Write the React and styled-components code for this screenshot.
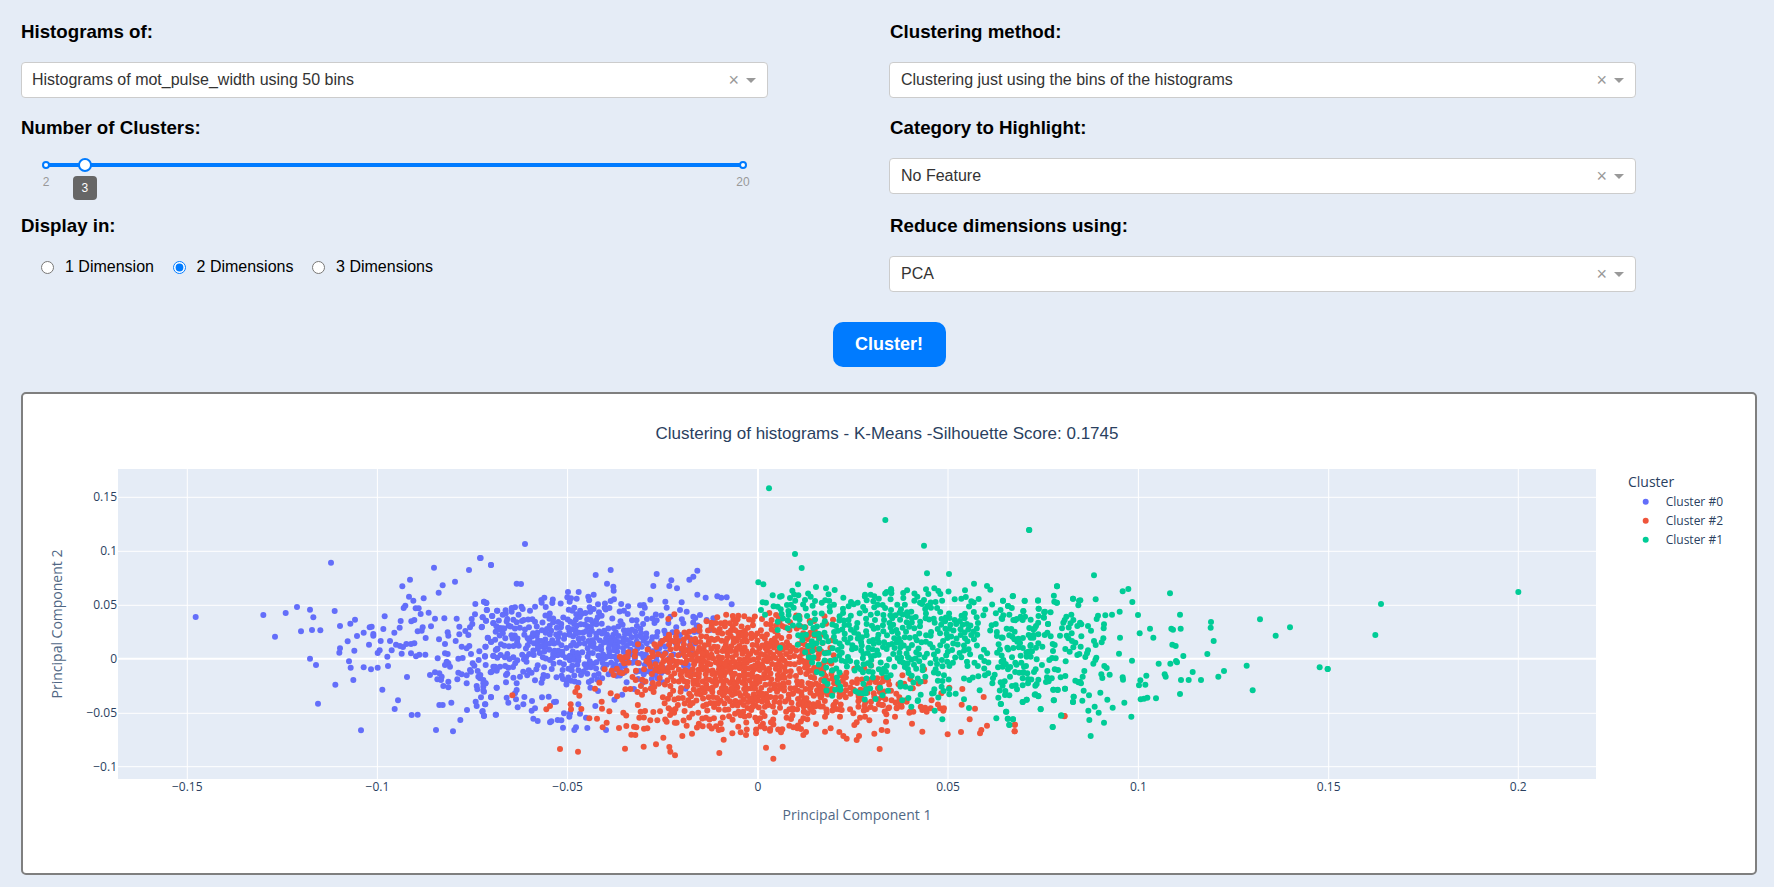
import React, { useMemo } from "react";
import styled, { createGlobalStyle } from "styled-components";

const Global = createGlobalStyle`
  html, body { margin: 0; padding: 0; background: #e5ecf6; }
  body { font-family: "Liberation Sans", Arial, sans-serif; color: #000; }
`;

const Page = styled.div`
  width: 1774px;
  height: 887px;
  overflow: hidden;
  display: flex;
  flex-direction: column;
  background: #e5ecf6;
`;
const Controls = styled.div`
  display: grid;
  grid-template-columns: 889px 1fr;
  grid-template-rows: 96px 98px 81px;
  padding-top: 17px;
`;
const Field = styled.div`
  padding-left: ${(p) => (p.$right ? "0" : "21px")};
  width: ${(p) => (p.$right ? "747px" : "768px")};
  box-sizing: border-box;
`;
const Label = styled.div`
  font-size: 18.72px;
  font-weight: 700;
  line-height: 27px;
  height: 27px;
  margin-top: 1px;
  margin-bottom: 17px;
  padding-left: ${(p) => (p.$right ? "1px" : "0")};
`;
const SelectBox = styled.div`
  height: 36px;
  box-sizing: border-box;
  background: #fff;
  border: 1px solid #ccc;
  border-radius: 4px;
  display: flex;
  align-items: center;
  padding: 0 10px 0 ${(p) => (p.$right ? "11px" : "10px")};
  font-size: 16px;
  color: #333;
`;
const SelectValue = styled.span`
  flex: 1;
  white-space: nowrap;
`;
const Clear = styled.span`
  color: #999;
  font-size: 18px;
  line-height: 1;
  margin-right: 7px;
`;
const Arrow = styled.span`
  width: 0;
  height: 0;
  border-style: solid;
  border-width: 5px 5px 0;
  border-color: #999 transparent transparent;
  margin-right: 1px;
`;
const SliderWrap = styled.div`
  position: relative;
  height: 60px;
  margin-top: -18px;
  margin-left: 25px;
  width: 697px;
`;
const Track = styled.div`
  position: absolute;
  left: 0;
  right: 0;
  top: 23px;
  height: 4px;
  background: #007bff;
`;
const Dot = styled.span`
  position: absolute;
  top: 21px;
  width: 8px;
  height: 8px;
  box-sizing: border-box;
  margin-left: -4px;
  border: 2px solid #007bff;
  border-radius: 50%;
  background: #fff;
`;
const Thumb = styled.span`
  position: absolute;
  top: 18px;
  width: 14px;
  height: 14px;
  box-sizing: border-box;
  margin-left: -7px;
  border: 2px solid #007bff;
  border-radius: 50%;
  background: #fff;
`;
const Mark = styled.span`
  position: absolute;
  top: 35px;
  transform: translateX(-50%);
  font-size: 12px;
  line-height: 14px;
  color: #999;
`;
const Tip = styled.span`
  position: absolute;
  top: 36px;
  width: 24px;
  height: 24px;
  margin-left: -12px;
  border-radius: 4px;
  background: #666;
  color: #fff;
  font-size: 12px;
  display: flex;
  align-items: center;
  justify-content: center;
`;
const RadioRow = styled.div`
  display: flex;
  gap: 18.6px;
  padding-left: 20px;
  height: 20px;
  align-items: center;
  margin-top: 18px;
`;
const RadioLabel = styled.label`
  display: flex;
  align-items: center;
  font-size: 16px;
  line-height: 20px;
`;
const RadioInput = styled.input`
  width: 13px;
  height: 13px;
  margin: 0 11px 0 0;
  accent-color: #007bff;
`;
const ButtonRow = styled.div`
  display: flex;
  justify-content: center;
  padding: 30px 0 0 4px;
  margin-bottom: 25px;
  height: 45px;
`;
const Button = styled.button`
  width: 113px;
  height: 45px;
  border: 0;
  border-radius: 10px;
  background: #007bff;
  color: #fff;
  font: 700 18px "Liberation Sans", Arial, sans-serif;
`;
const Panel = styled.div`
  width: 1736px;
  height: 483px;
  box-sizing: border-box;
  margin-left: 21px;
  background: #fff;
  border: 2px solid #7f7f7f;
  border-radius: 5px;
  overflow: hidden;
`;
const Chart = styled.svg`
  display: block;
  width: 1732px;
  height: 479px;
`;
const Tick = styled.text`
  font: 12px "Open Sans", sans-serif;
  fill: #2a3f5f;
`;
const AxisTitle = styled.text`
  font: 14px "Open Sans", sans-serif;
  fill: #506784;
`;
const ChartTitle = styled.text`
  font: 17px "Liberation Sans", Arial, sans-serif;
  fill: #2a3f5f;
`;
const LegendTitle = styled.text`
  font: 14px "Open Sans", sans-serif;
  fill: #2a3f5f;
`;
const LegendItem = styled.text`
  font: 12px "Open Sans", sans-serif;
  fill: #2a3f5f;
`;

const BLUE = "#636efa";
const RED = "#ef553b";
const GREEN = "#00cc96";

const from = (ox, oy, a) => {
  const out = [];
  for (let i = 0; i < a.length; i += 2) out.push([ox + a[i] / 3, oy + a[i + 1] / 3]);
  return out;
};

const blueLeft = from(0, 390, [587,681,790,675,825,740,857,669,891,651,903,724,930,659,936,720,940,682,961,721,930,806,948,825,954,941,993,518,1004,663,1006,884,1020,708,1018,788,1020,775,1043,754,1047,814,1052,833,1060,870,1063,782,1051,701,1065,689,1071,738,1083,1021,1091,728,1091,832,1107,764,1109,712,1115,710,1120,732,1120,737,1113,838,1133,833,1133,789,1139,781,1142,753,1147,899,1150,717,1154,679,1162,800,1164,828,1170,753,1175,781,1183,728,1184,957,1194,931,1188,764,1199,713,1202,693,1200,768,1209,771,1205,791,1211,654,1216,647,1207,589,1221,861,1219,762,1230,569,1227,620,1240,632,1233,762,1243,760,1233,790,1234,694,1243,690,1247,655,1256,655,1262,672,1253,724,1268,712,1265,722,1277,744,1248,799,1258,794,1276,794,1271,625,1286,668,1293,709,1305,686,1302,533,1316,608,1328,586,1365,575,1407,540,1440,504,1473,525,1235,975,1253,974,1308,1020,1359,1024,1381,990,1401,960,1318,945,1328,945,1354,938,1290,855,1305,847,1318,850,1312,868,1325,860,1323,870,1345,875,1330,888,1345,892,1400,880,1375,848,1372,868,1385,853,1400,856,1410,840,1413,845,1418,820,1423,827,1433,843,1435,860,1440,865,1450,870,1457,880,1430,888,1432,898,1450,890,1452,905,1443,922,1427,935,1430,948,1456,943,1473,921,1490,893,1447,965,1452,977,1488,974,1313,805,1340,815,1335,825,1345,820,1350,830,1375,806,1388,804,1413,792,1436,810,1455,800,1480,797,1457,825,1480,830,1490,838,1472,847,1492,803,1438,784,1457,770,1492,776,1385,770,1400,775,1408,768,1335,790,1343,792,1335,762,1317,748,1367,753,1345,737,1343,727,1378,733,1405,735,1396,723,1378,710,1410,712,1417,702,1415,687,1425,673,1370,686,1333,685,1445,712,1448,682,1458,692,1476,678,1480,700,1487,725,1464,744,1474,755,1426,642,1452,635,1459,639,1460,660,1492,662]);

const blueMid = from(480, 520, [135,72,2,114,33,135,110,191,123,192,347,165,392,150,381,191,400,200,401,212,264,216,296,216,262,232,273,235,290,236,341,224,184,240,193,233,392,243,402,238,354,253,374,263,530,162,652,152,640,170,628,179,574,181,568,198,591,205,520,198,652,224,677,233,712,229,724,233,740,232,755,253,511,239,556,245,605,247,491,255,560,263,12,245,19,249,21,270,51,272,37,288,8,292,18,302,40,309,6,320,68,284,82,297,100,299,110,307,86,317,59,324,67,325,95,275,105,262,128,267,150,272,131,300,16,380,23,353,33,366,63,373,52,387,15,408,40,408,62,405,82,402,100,412,45,440,60,440,35,455,50,452,78,465,85,443,78,487,120,470,110,490,1,465,10,490,16,490,10,512,33,532,50,503,80,533,85,548,110,510,105,520,108,538,113,562,130,553,156,543,186,532,206,530,222,546,228,545,155,572,165,565,160,596,173,603,210,607,214,604,233,600,244,601,249,623,252,580,270,580,268,590,300,581,318,593,295,553,346,558,322,624,288,622,283,630,378,630,15,553,8,573,12,588,47,584,600,270,620,275,640,290,660,285,680,300,700,295,610,310,650,320,690,330,600,345,630,355]);

const redMid = from(480, 520, [97,526,199,568,210,558,272,553,273,568,304,567,286,516,292,503,298,527,240,687,294,695,328,595,351,596,388,574,365,545,366,566,380,608,368,622,417,624,439,618,462,620,469,622,492,626,502,625,454,644,466,645,435,686,491,680,528,673,550,653,568,681,571,695,585,706,607,648,636,641,718,699,731,659,858,683,880,716,430,578,478,593,520,576,532,601,560,605,590,608,620,617,668,619,688,618,716,630,725,628,757,640,782,637,798,645,828,640,870,632,374,448,395,452,358,488,345,506,392,520,427,460,474,373,434,412,440,412,565,297,583,283,567,344]);

const redRight = from(780, 520, [8,680,299,687,503,643,427,635,543,636,600,640,604,630,621,617,705,614,704,634,569,598,585,566,545,554,611,531,547,507,484,520,508,503,853,589,396,611,322,633,305,630,283,641,135,635,178,636,190,648,200,656,230,660,237,648,70,645,78,636,3,637,28,617,40,622,52,625,63,627,108,612,318,605,345,590,268,601,223,615,230,607,185,570,180,590,140,578,135,590,72,575,70,595,82,598,38,565,0,563,95,570,100,553,160,557,220,580,240,593,260,568,255,590,305,555,319,583,325,565,350,565,365,560,388,578,400,575,427,570,440,575,452,565,480,565,490,572,380,545]).concat(from(1000, 470, [44,764,44,784,194,738]));

const greenMid = from(780, 520, [45,102,65,144,316,0,432,77,441,160,507,162,748,30,54,193,37,212,30,234,5,228,75,240,92,230,108,201,138,205,164,210,190,233,270,195,255,224,272,224,333,207,320,216,334,220,213,246,233,248,260,241,280,244,403,242,420,248,432,240,438,208,445,222,463,205,475,213,481,222,555,211,582,191,621,198,631,209,544,236,574,244,596,237,669,242,698,229,734,242,774,241,831,199,830,248,879,236,897,242,684,258,730,273,776,266,793,277,792,293,804,312,567,564,649,595,679,575,683,596,699,598,688,614,782,568,821,541,843,587,818,621,487,598,464,572,394,560,413,543,422,524,552,538,527,521,599,511,655,533,662,552,728,546,740,539,766,523,775,528,820,509,833,509,855,506,881,530,879,546,181,509,237,519,248,520,257,520,259,508,324,512,507,507,461,519,463,508]);

const greenRight = from(1000, 470, [87,180,282,316,171,349,368,364,385,357,510,370,171,398,219,386,241,391,287,388,235,406,397,396,39,378,9,392,74,393,114,392,24,408,116,416,133,426,70,424,359,425,414,435,336,434,316,436,540,434,290,447,294,437,633,456,632,473,780,448,870,472,827,497,641,513,622,552,740,587,758,661,959,592,983,597,672,603,655,620,603,630,578,606,566,630,543,630,550,558,527,528,517,524,511,581,528,573,531,577,476,581,494,613,497,620,439,617,421,631,417,646,436,644,396,572,357,551,360,503,450,476,460,503,419,490,514,476,519,479,542,476,540,672,468,685,442,683,432,686,422,688,373,698,338,713,322,689,301,668,394,740,312,758,296,728,284,710,265,722,268,750,272,798,158,771,184,736,122,717,162,691,221,680,219,696,247,692,251,662,267,676,195,656,160,659,173,660,80,689,68,696,115,679,104,674,18,725,24,746,28,765,39,748,3,702,16,663,15,675,28,676,51,658,36,648,47,646,68,646,329,614,304,613,307,624,368,622,369,629,313,588,320,594,253,603,248,620,240,635,226,632,235,637,243,640,280,581,289,563,286,570,256,561,261,550,264,541,232,555,238,552,196,618,182,622,174,600,197,574,148,570,167,565,110,568,142,603,141,622,146,634,138,636,115,629,110,642,106,647,84,640,84,627,68,625,70,607,58,608,82,610,102,606,107,598,30,620,24,598,10,570,12,580,8,590,14,634,2,637,78,588,72,590,36,562,46,578,62,557,80,560,92,560,92,525,85,545,96,544,108,533,115,520,127,530,22,533,40,534,52,515,60,519,56,532,37,500,8,503,20,476,44,485,86,495,92,503,100,503,115,493,108,468,104,475,142,488,152,499,144,462,92,449,40,450,50,447,68,450,62,440,28,434,10,436,5,445,131,442,180,497,200,497,215,490,205,505,216,513,226,518,242,530,244,499,186,475,190,458,194,450,199,440,214,434,220,450,232,468,240,458,244,463,264,468,273,482,312,463,311,475,310,505,305,517,282,513,287,525,158,522,164,525,196,537,209,545,220,532]);

const greenExtra = [
  ...from(640, 410, [387,235]),
  ...from(1300, 450, [83,657,226,555,243,462,655,426]),
  ...from(480, 520, [835,187,850,193,878,226,900,230,848,247,858,248,843,270,855,284,893,260,893,305,893,330,900,383]),
];

const rng = (seed) => () => {
  seed = (seed + 0x6d2b79f5) | 0;
  let t = Math.imul(seed ^ (seed >>> 15), 1 | seed);
  t = (t + Math.imul(t ^ (t >>> 7), 61 | t)) ^ t;
  return ((t ^ (t >>> 14)) >>> 0) / 4294967296;
};

const cloud = (seed, n, cx, cy, sx, sy, gap, keep) => {
  const r = rng(seed);
  const out = [];
  let guard = 0;
  while (out.length < n && guard++ < n * 60) {
    const u = Math.sqrt(-2 * Math.log(r() + 1e-9));
    const a = 2 * Math.PI * r();
    const x = cx + sx * u * Math.cos(a);
    const y = cy + sy * u * Math.sin(a);
    if (!keep(x, y)) continue;
    if (out.some((p) => (p[0] - x) ** 2 + (p[1] - y) ** 2 < gap * gap)) continue;
    out.push([x, y]);
  }
  return out;
};

const buildPoints = () => {
  const blue = [
    ...blueLeft,
    ...blueMid,
    ...cloud(7, 430, 592, 645, 52, 19, 3.2, (x, y) => x > 495 && x < 700 && y > 596 && y < 700),
  ];
  const red = [
    ...redMid,
    ...redRight,
    ...cloud(11, 680, 738, 668, 50, 27, 3.2, (x, y) => x > 612 && x < 835 && y > 613 + Math.max(0, 720 - x) * 0.42 && y < 730),
    ...cloud(13, 120, 850, 695, 40, 14, 3.2, (x, y) => x > 790 && x < 945 && y > 665 && y < 712),
  ];
  const green = [
    ...greenMid,
    ...greenRight,
    ...greenExtra,
    ...cloud(17, 470, 880, 643, 75, 24, 3.6, (x, y) => x > 768 + (y - 598) * 0.62 && x < 1075 && y > 590 && y < 702),
  ];
  return [
    { color: BLUE, pts: blue },
    { color: RED, pts: red },
    { color: GREEN, pts: green },
  ];
};

const xTicks = [
  ["−0.15", 187.3], ["−0.1", 377.4], ["−0.05", 567.6], ["0", 758], ["0.05", 948],
  ["0.1", 1138.4], ["0.15", 1328.7], ["0.2", 1518.3],
];
const yTicks = [
  ["0.15", 497.3], ["0.1", 551.3], ["0.05", 605.3], ["0", 658.8], ["−0.05", 713.3], ["−0.1", 766.7],
];
const legend = [
  ["Cluster #0", BLUE, 501.7], ["Cluster #2", RED, 520.7], ["Cluster #1", GREEN, 539.7],
];

function ScatterChart() {
  const series = useMemo(buildPoints, []);
  return (
    <Chart viewBox="23 394 1732 479">
      <ChartTitle x="887" y="439" textAnchor="middle">
        Clustering of histograms - K-Means -Silhouette Score: 0.1745
      </ChartTitle>
      <rect x="118" y="469" width="1478" height="310" fill="#e5ecf6" />
      {xTicks.map(([t, x]) => (
        <line key={t} x1={x} x2={x} y1="469" y2="779" stroke="#fff" strokeWidth={t === "0" ? 2 : 1} />
      ))}
      {yTicks.map(([t, y]) => (
        <line key={t} x1="118" x2="1596" y1={y} y2={y} stroke="#fff" strokeWidth={t === "0" ? 2 : 1} />
      ))}
      {series.map((s) => (
        <g key={s.color} fill={s.color}>
          {s.pts.map(([x, y], i) => (
            <circle key={i} cx={x} cy={y} r="3" />
          ))}
        </g>
      ))}
      {xTicks.map(([t, x]) => (
        <Tick key={t} x={x} y="791" textAnchor="middle">{t}</Tick>
      ))}
      {yTicks.map(([t, y]) => (
        <Tick key={t} x="117" y={y + 4} textAnchor="end">{t}</Tick>
      ))}
      <AxisTitle x="857" y="820" textAnchor="middle">Principal Component 1</AxisTitle>
      <AxisTitle x="62" y="624" textAnchor="middle" transform="rotate(-90 62 624)">Principal Component 2</AxisTitle>
      <LegendTitle x="1628" y="487">Cluster</LegendTitle>
      {legend.map(([t, c, y]) => (
        <g key={t}>
          <circle cx="1645.7" cy={y} r="3" fill={c} />
          <LegendItem x="1665.7" y={y + 4}>{t}</LegendItem>
        </g>
      ))}
    </Chart>
  );
}

const Select = ({ value, right }) => (
  <SelectBox $right={right}>
    <SelectValue>{value}</SelectValue>
    <Clear>×</Clear>
    <Arrow />
  </SelectBox>
);

const pct = (v) => `${((v - 2) / 18) * 100}%`;

const Slider = ({ value }) => (
  <SliderWrap>
    <Track />
    <Dot style={{ left: pct(2) }} />
    <Dot style={{ left: pct(20) }} />
    <Thumb style={{ left: pct(value) }} />
    <Mark style={{ left: pct(2) }}>2</Mark>
    <Mark style={{ left: pct(20) }}>20</Mark>
    <Tip style={{ left: pct(value) }}>{value}</Tip>
  </SliderWrap>
);

const Radio = ({ label, checked }) => (
  <RadioLabel>
    <RadioInput type="radio" name="dims" defaultChecked={checked} />
    {label}
  </RadioLabel>
);

export default function App() {
  return (
    <Page>
      <Global />
      <Controls>
        <Field>
          <Label>Histograms of:</Label>
          <Select value="Histograms of mot_pulse_width using 50 bins" />
        </Field>
        <Field $right>
          <Label $right>Clustering method:</Label>
          <Select right value="Clustering just using the bins of the histograms" />
        </Field>
        <Field>
          <Label>Number of Clusters:</Label>
          <Slider value={3} />
        </Field>
        <Field $right>
          <Label $right>Category to Highlight:</Label>
          <Select right value="No Feature" />
        </Field>
        <Field>
          <Label>Display in:</Label>
          <RadioRow>
            <Radio label="1 Dimension" />
            <Radio label="2 Dimensions" checked />
            <Radio label="3 Dimensions" />
          </RadioRow>
        </Field>
        <Field $right>
          <Label $right>Reduce dimensions using:</Label>
          <Select right value="PCA" />
        </Field>
      </Controls>
      <ButtonRow>
        <Button>Cluster!</Button>
      </ButtonRow>
      <Panel>
        <ScatterChart />
      </Panel>
    </Page>
  );
}
